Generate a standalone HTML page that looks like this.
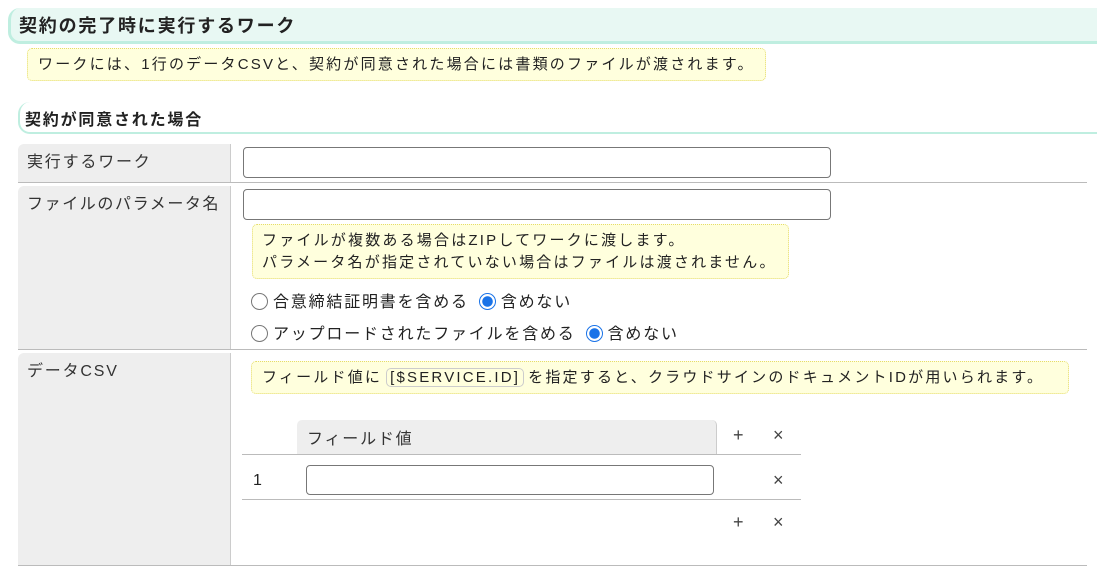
<!DOCTYPE html>
<html><head><meta charset="utf-8"><style>
*{box-sizing:border-box;margin:0;padding:0}
body{width:1097px;height:573px;background:#fff;font-family:"Liberation Sans","Noto Sans CJK JP",sans-serif;color:#222;position:relative;overflow:hidden;font-size:16px;letter-spacing:1.8px}
.a{position:absolute;white-space:nowrap}
.h1{left:8px;top:8px;width:1100px;height:36px;background:#e8f8f3;border-bottom:3px solid #bfeee0;border-left:3px solid #bfeee0;border-radius:12px 0 0 12px;font-weight:bold;font-size:18px;padding:4px 0 0 8px}
.note{background:#ffffdd;border:1px dotted #e5dc6a;border-radius:5px;font-size:15px;line-height:22px;letter-spacing:2.2px}
.h2{left:18px;top:102px;width:1090px;height:32px;border-left:2px solid #bfeee0;border-bottom:2px solid #bfeee0;border-radius:12px 0 0 12px;font-weight:bold;font-size:16px;padding:4px 0 0 5px}
.lab{left:18px;width:213px;background:#eee;border-right:1px solid #ccc;border-radius:6px 0 0 0;padding:4px 0 0 9px;font-size:16px;color:#333}
.line{height:1px;background:#bbb}
.inp{border:1px solid #777;border-radius:4px;background:#fff;height:31px}
.rad{width:17px;height:17px;border-radius:50%;border:1px solid #777;display:inline-block;vertical-align:-3px;margin-right:5px;background:#fff}
.rad.on{border:1px solid #1a73e8;background:radial-gradient(circle,#1a73e8 0 5px,#fff 5.5px);margin-left:10px}
.opt{font-size:16px;color:#222}
.tag{border:1px solid #ccc;border-radius:5px;padding:0 3px;margin:0 4px}
.pm{font-size:18px;color:#444;letter-spacing:0}
</style></head><body>
<div class="a h1">契約の完了時に実行するワーク</div>
<div class="a note" style="left:27px;top:48px;width:739px;height:33px;padding:5px 0 0 10px">ワークには、1行のデータCSVと、契約が同意された場合には書類のファイルが渡されます。</div>
<div class="a h2">契約が同意された場合</div>

<div class="a lab" style="top:144px;height:38px">実行するワーク</div>
<div class="a inp" style="left:243px;top:147px;width:588px"></div>
<div class="a line" style="left:18px;top:182px;width:1069px"></div>

<div class="a lab" style="top:186px;height:163px;letter-spacing:1.6px">ファイルのパラメータ名</div>
<div class="a inp" style="left:243px;top:189px;width:588px"></div>
<div class="a note" style="left:252px;top:224px;width:537px;height:55px;padding:5px 0 0 9px">ファイルが複数ある場合はZIPしてワークに渡します。<br>パラメータ名が指定されていない場合はファイルは渡されません。</div>
<div class="a opt" style="left:251px;top:288px"><span class="rad"></span>合意締結証明書を含める<span class="rad on"></span>含めない</div>
<div class="a opt" style="left:251px;top:320px"><span class="rad"></span>アップロードされたファイルを含める<span class="rad on"></span>含めない</div>
<div class="a line" style="left:18px;top:349px;width:1069px"></div>

<div class="a lab" style="top:353px;height:212px">データCSV</div>
<div class="a note" style="left:251px;top:361px;width:818px;height:33px;padding:5px 0 0 10px">フィールド値に<span class="tag">[$SERVICE.ID]</span>を指定すると、クラウドサインのドキュメントIDが用いられます。</div>
<div class="a" style="left:297px;top:420px;width:420px;height:34px;background:#eee;border-right:1px solid #ccc;border-radius:5px 5px 0 0;padding:5px 0 0 10px;font-size:16px;color:#333">フィールド値</div>
<div class="a pm" style="left:733px;top:425px">+</div>
<div class="a pm" style="left:773px;top:425px">×</div>
<div class="a line" style="left:242px;top:454px;width:559px"></div>
<div class="a" style="left:253px;top:472px;font-size:16px">1</div>
<div class="a inp" style="left:306px;top:465px;width:408px;height:30px"></div>
<div class="a pm" style="left:773px;top:470px">×</div>
<div class="a line" style="left:242px;top:499px;width:559px"></div>
<div class="a pm" style="left:733px;top:512px">+</div>
<div class="a pm" style="left:773px;top:512px">×</div>
<div class="a line" style="left:18px;top:565px;width:1069px"></div>
</body></html>
